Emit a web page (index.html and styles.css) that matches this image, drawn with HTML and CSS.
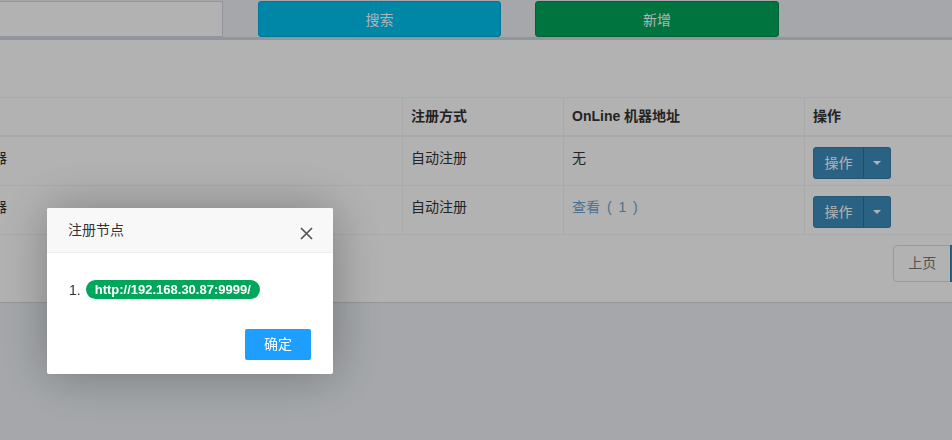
FILE: index.html
```html
<!DOCTYPE html>
<html lang="zh-CN">
<head>
<meta charset="utf-8">
<title>执行器管理</title>
<link rel="stylesheet" href="styles.css">
</head>
<body>
<div class="page">
  <div class="toolbar">
    <div class="search-input"></div>
    <button class="btn btn-info">搜索</button>
    <button class="btn btn-success">新增</button>
  </div>
  <div class="box">
    <table class="grid">
      <colgroup>
        <col class="c1"><col class="c2"><col class="c3"><col class="c4">
      </colgroup>
      <thead>
        <tr><th>名称</th><th>注册方式</th><th>OnLine 机器地址</th><th>操作</th></tr>
      </thead>
      <tbody>
        <tr>
          <td>执行器</td><td>自动注册</td><td>无</td>
          <td><div class="btn-group"><span class="bg-main">操作</span><span class="bg-caret"><i class="caret"></i></span></div></td>
        </tr>
        <tr>
          <td>执行器</td><td>自动注册</td><td><a class="link">查看 ( 1 )</a></td>
          <td><div class="btn-group"><span class="bg-main">操作</span><span class="bg-caret"><i class="caret"></i></span></div></td>
        </tr>
      </tbody>
    </table>
    <div class="pager">
      <span class="page-item disabled">上页</span>
      <span class="page-item active">1</span>
      <span class="page-item disabled">下页</span>
    </div>
  </div>
</div>

<div class="shade"></div>

<div class="layer">
  <div class="layer-title">注册节点
    <span class="layer-close"><svg width="13" height="13" viewBox="0 0 13 13"><path d="M1 1L12 12M12 1L1 12" stroke="#555" stroke-width="1.7" fill="none"/></svg></span>
  </div>
  <div class="layer-body">
    <span class="num">1.</span><span class="pill">http://192.168.30.87:9999/</span>
  </div>
  <div class="layer-foot">
    <span class="layer-btn">确定</span>
  </div>
</div>
</body>
</html>
```
FILE: styles.css
```css
html, body {
  margin: 0;
  height: 100%;
  overflow: hidden;
}
body {
  background: #ecf0f5;
  font-family: "Liberation Sans", "Noto Sans CJK SC", sans-serif;
  font-size: 14px;
  color: #333;
}
.page {
  width: 1105px;
  margin-left: -54px;
  padding-top: 1px;
}
.toolbar {
  display: flex;
  height: 36px;
}
.search-input {
  box-sizing: border-box;
  width: 277px;
  height: 36px;
  background: #fff;
  border: 1px solid #d2d6de;
}
.btn {
  box-sizing: border-box;
  height: 36px;
  padding: 0;
  border: 1px solid;
  border-radius: 3px;
  color: #fff;
  font: inherit;
}
.btn-info {
  margin-left: 35px;
  width: 243px;
  background: #00c0ef;
  border-color: #00acd6;
}
.btn-success {
  margin-left: 34px;
  width: 244px;
  background: #00a65a;
  border-color: #008d4c;
}
.box {
  background: #fff;
  border-top: 3px solid #d2d6de;
  border-radius: 3px;
  box-shadow: 0 1px 1px rgba(0, 0, 0, 0.1);
  padding: 57px 10px 20px;
}
.grid {
  width: 1085px;
  border-collapse: collapse;
  table-layout: fixed;
}
.c1 { width: 446px; }
.c2 { width: 161px; }
.c3 { width: 241px; }
.c4 { width: 237px; }
.grid th, .grid td {
  border: 1px solid #f4f4f4;
  line-height: 20px;
  text-align: left;
  vertical-align: top;
  white-space: nowrap;
}
.grid thead th {
  padding: 8px 8px 9px;
  border-bottom-width: 2px;
  font-weight: bold;
}
.grid tbody td {
  padding: 11px 8px 5px;
}
.link {
  color: #6aa4cc;
  word-spacing: 3px;
}
.btn-group {
  display: flex;
  width: max-content;
  height: 32px;
  margin-top: -1px;
  margin-bottom: 1px;
  color: #fff;
}
.bg-main, .bg-caret {
  box-sizing: border-box;
  height: 32px;
  background: #3c8dbc;
  border: 1px solid #367fa9;
  display: flex;
  align-items: center;
  justify-content: center;
}
.bg-main {
  width: 51px;
  border-radius: 3px 0 0 3px;
}
.bg-caret {
  width: 28px;
  border-left: 1px solid #2e6f96;
  margin-left: -1px;
  border-radius: 0 3px 3px 0;
}
.caret {
  width: 0;
  height: 0;
  border-left: 4px solid transparent;
  border-right: 4px solid transparent;
  border-top: 4px solid #fff;
}
.pager {
  display: flex;
  justify-content: flex-end;
  margin-top: 10px;
}
.page-item {
  box-sizing: border-box;
  height: 37px;
  line-height: 35px;
  padding: 0 14px;
  background: #fff;
  border: 1px solid #ddd;
  margin-left: -1px;
}
.page-item:first-child {
  border-radius: 4px 0 0 4px;
}
.page-item:last-child {
  border-radius: 0 4px 4px 0;
}
.page-item.disabled {
  color: #777;
}
.page-item.active {
  padding: 0 12px;
  background: #3c8dbc;
  border-color: #367fa9;
  color: #fff;
}
.shade {
  position: fixed;
  inset: 0;
  background: rgba(0, 0, 0, 0.3);
}
.layer {
  position: fixed;
  left: 47px;
  top: 208px;
  width: 286px;
  background: #fff;
  border-radius: 2px;
  box-shadow: 1px 1px 50px rgba(0, 0, 0, 0.3);
}
.layer-title {
  position: relative;
  height: 44px;
  line-height: 44px;
  padding: 0 80px 0 21px;
  background: #f8f8f8;
  border-bottom: 1px solid #eee;
  border-radius: 2px 2px 0 0;
  color: #333;
}
.layer-close {
  position: absolute;
  right: 20px;
  top: 19px;
  width: 13px;
  height: 13px;
  line-height: 0;
}
.layer-body {
  display: flex;
  align-items: center;
  height: 19px;
  padding: 27px 22px 0;
}
.num {
  color: #333;
  margin-right: 5px;
  font-size: 14px;
}
.pill {
  height: 19px;
  line-height: 19px;
  padding: 0 9px;
  border-radius: 10px;
  background: #00a65a;
  color: #fff;
  font-weight: bold;
  font-size: 13px;
}
.layer-foot {
  display: flex;
  justify-content: flex-end;
  padding: 30px 22px 14px;
}
.layer-btn {
  height: 31px;
  line-height: 31px;
  padding: 0 19px;
  background: #1e9fff;
  color: #fff;
  border-radius: 2px;
}
```
